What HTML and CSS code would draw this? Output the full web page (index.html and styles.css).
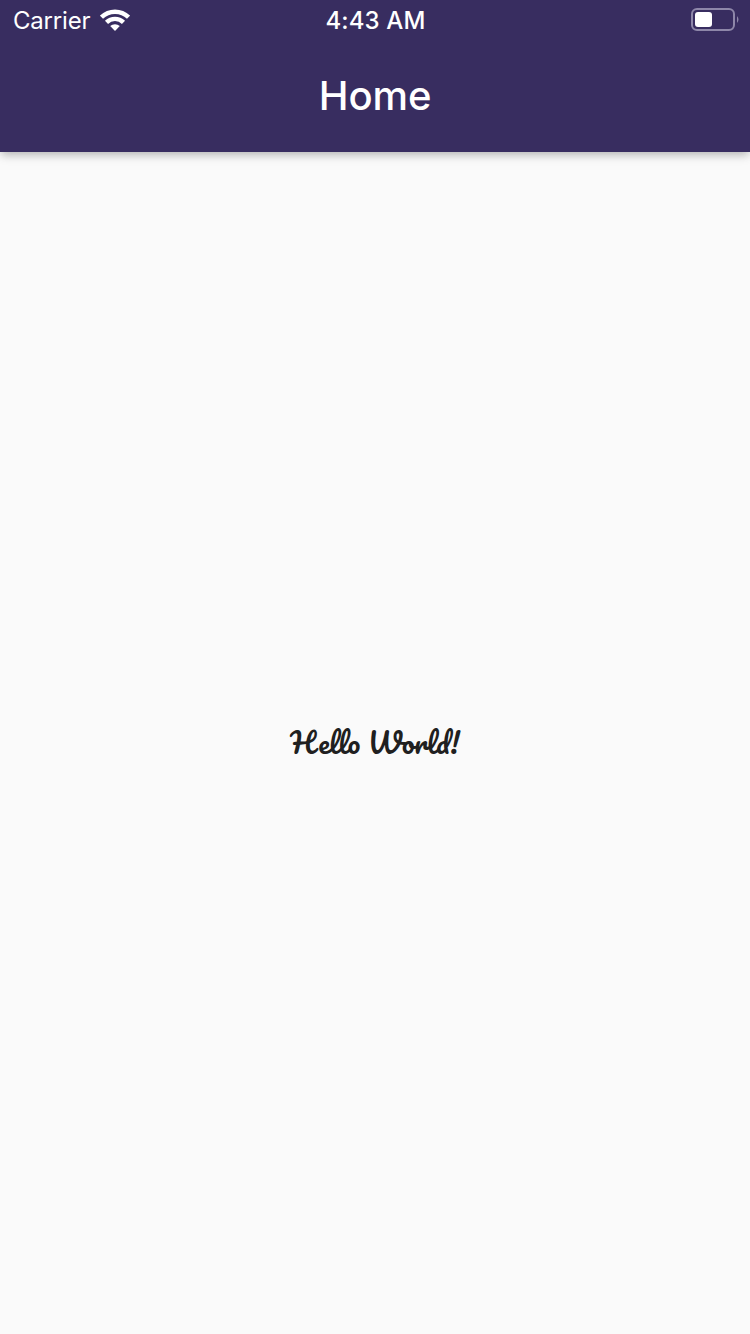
FILE: index.html
```html
<!DOCTYPE html>
<html lang="en">
<head>
<meta charset="utf-8">
<title>Home</title>
<link rel="stylesheet" href="styles.css">
</head>
<body>
<header class="app-bar">
  <div class="status-bar">
    <div class="network">
      <span class="carrier">Carrier</span>
      <svg class="wifi" width="30" height="22" viewBox="0 0 30 22" fill="none" stroke="#fff" stroke-width="4.400">
        <path d="M1.500 8.200a19.400 19.400 0 0 1 27 0"/>
        <path d="M6.500 13.300a12.200 12.200 0 0 1 17 0"/>
        <path d="M15 22l-4.800-4.900a7 7 0 0 1 9.600 0z" fill="#fff" stroke="none"/>
      </svg>
    </div>
    <time class="clock">4:43 AM</time>
    <svg class="battery" width="49" height="24" viewBox="0 0 49 24">
      <rect x="1" y="1" width="42" height="21" rx="5" fill="none" stroke="#8e87a9" stroke-width="2"/>
      <rect x="4" y="4" width="17" height="15" rx="3" fill="#fff"/>
      <path d="M46 8q3 3.500 0 7z" fill="#8e87a9"/>
    </svg>
  </div>
  <h1 class="title">Home</h1>
</header>
<main class="content"><p class="greeting">Hello World!</p></main>
</body>
</html>
```
FILE: styles.css
```css
* { box-sizing: border-box; }
body { margin: 0; height: 1334px; display: flex; flex-direction: column; background: #fafafa; font-family: Inter, sans-serif; }
.app-bar { height: 152px; flex: none; background: #382d60; color: #fff; box-shadow: 0 4px 8px -2px rgba(0,0,0,.18), 0 4px 10px rgba(0,0,0,.12); }
.status-bar { height: 40px; display: grid; grid-template-columns: 1fr auto 1fr; align-items: center; padding: 0 10px 0 13px; }
.network { display: flex; align-items: center; gap: 10px; }
.carrier { font-size: 24px; letter-spacing: -.2px; line-height: 28px; padding-top: 2px; }
.clock { font-size: 24px; font-weight: 550; letter-spacing: .15px; line-height: 28px; padding: 2px 2px 0 0; }
.battery { justify-self: end; }
.title { margin: 0; height: 112px; line-height: 112px; text-align: center; font-size: 40px; font-weight: 550; letter-spacing: -.1px; }
.content { flex: 1; display: flex; align-items: center; justify-content: center; padding-bottom: 2px; }
.greeting { margin: 0; color: #202020; font: 400 28px "Pacifico", cursive; }
```
